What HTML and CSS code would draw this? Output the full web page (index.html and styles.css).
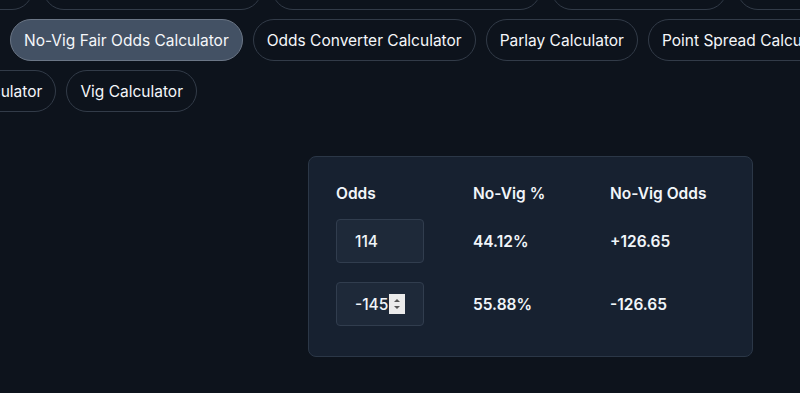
FILE: index.html
```html
<!DOCTYPE html>
<html lang="en">
<head>
<meta charset="utf-8">
<title>No-Vig Fair Odds Calculator</title>
<link rel="stylesheet" href="styles.css">
</head>
<body>
<div class="page">
  <nav class="pills">
    <div class="row row-1">
      <a class="pill w-160">Arbitrage Calculator</a>
      <a class="pill w-219">Bet Hedging Calculator</a>
      <a class="pill w-269">Expected Value Calculator</a>
      <a class="pill w-176">Kelly Calculator</a>
      <a class="pill w-160">Moneyline Calculator</a>
    </div>
    <div class="row row-2">
      <a class="pill active">No-Vig Fair Odds Calculator</a>
      <a class="pill">Odds Converter Calculator</a>
      <a class="pill">Parlay Calculator</a>
      <a class="pill">Point Spread Calculator</a>
    </div>
    <div class="row row-3">
      <a class="pill">Round Robin Calculator</a>
      <a class="pill">Vig Calculator</a>
    </div>
  </nav>

  <section class="card">
    <div class="grid">
      <div class="th">Odds</div>
      <div class="th">No-Vig %</div>
      <div class="th">No-Vig Odds</div>

      <div class="field"><input class="odds-input" type="text" value="114"></div>
      <div class="td">44.12%</div>
      <div class="td">+126.65</div>

      <div class="field">
        <input class="odds-input" type="text" value="-145">
        <span class="spin"><span class="arrow up"></span><span class="arrow down"></span></span>
      </div>
      <div class="td">55.88%</div>
      <div class="td">-126.65</div>
    </div>
  </section>
</div>
</body>
</html>
```

FILE: styles.css
```css
html, body {
  margin: 0;
  padding: 0;
  background: #0d131c;
  overflow: hidden;
}

body {
  width: 800px;
  height: 393px;
  font-family: Inter, "Noto Sans", "Liberation Sans", sans-serif;
  color: #f1f5f9;
}

.page {
  display: flex;
  flex-direction: column;
}

.pills {
  display: flex;
  flex-direction: column;
  gap: 9px;
  margin-top: -32px;
}

.row {
  display: flex;
  gap: 10px;
  flex-wrap: nowrap;
}

.row-1 {
  margin-left: -127px;
}

.row-2 {
  padding-left: 10px;
}

.row-3 {
  width: 197px;
  justify-content: flex-end;
}

.pill {
  flex-shrink: 0;
  box-sizing: border-box;
  height: 42px;
  display: flex;
  align-items: center;
  justify-content: center;
  padding: 0 13px;
  border: 1px solid #323b48;
  border-radius: 21px;
  font-size: 15.5px;
  color: #f5f7fa;
  white-space: nowrap;
  text-decoration: none;
}

.pill.active {
  background: #435164;
  border-color: #6b7686;
}

.w-160 { width: 160px; }
.w-219 { width: 219px; }
.w-269 { width: 269px; }
.w-176 { width: 176px; }

.card {
  box-sizing: border-box;
  width: 445px;
  margin-top: 44px;
  margin-left: 308px;
  padding: 31px 0 30px 27px;
  background: #172130;
  border: 1px solid #2b3747;
  border-radius: 8px;
}

.grid {
  display: grid;
  grid-template-columns: 137px 137px 1fr;
  row-gap: 19px;
  align-items: center;
}

.th {
  font-size: 15.5px;
  font-weight: 600;
  line-height: 12px;
}

.td {
  font-size: 15.5px;
  font-weight: 600;
}

.field {
  position: relative;
  width: 88px;
  height: 44px;
}

.odds-input {
  box-sizing: border-box;
  width: 88px;
  height: 44px;
  margin: 0;
  padding: 0 18px;
  background: #1e2939;
  border: 1px solid #313d4e;
  border-radius: 4px;
  font-family: inherit;
  font-size: 15.5px;
  font-weight: 500;
  color: #f1f5f9;
  outline: none;
}

.spin {
  position: absolute;
  left: 53px;
  top: 12px;
  width: 16px;
  height: 20px;
  background: #ebebeb;
  display: flex;
  flex-direction: column;
  align-items: center;
  justify-content: center;
  gap: 4px;
}

.arrow {
  width: 0;
  height: 0;
  border-left: 3.5px solid transparent;
  border-right: 3.5px solid transparent;
}

.arrow.up {
  border-bottom: 3.5px solid #555;
}

.arrow.down {
  border-top: 3.5px solid #555;
}
```
